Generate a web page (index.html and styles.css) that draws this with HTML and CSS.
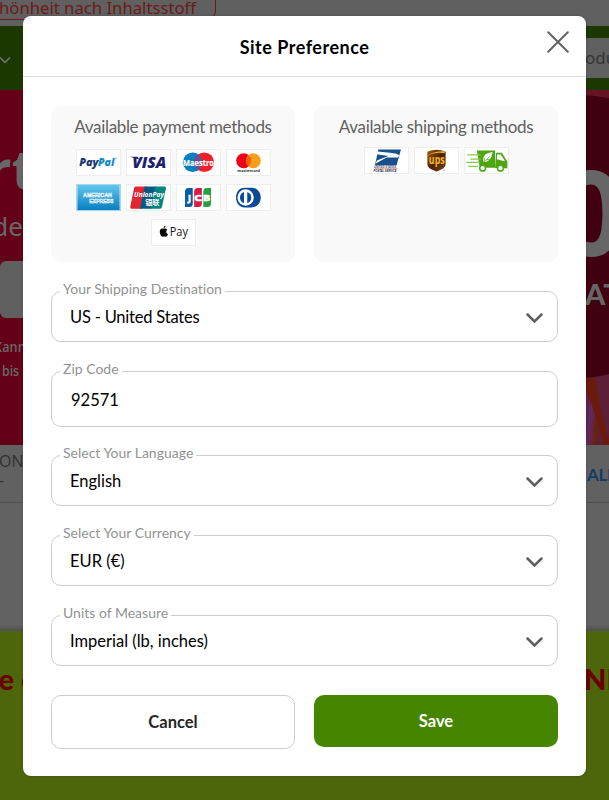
FILE: index.html
```html
<!DOCTYPE html>
<html lang="en">
<head>
<meta charset="utf-8">
<title>Site Preference</title>
<link rel="stylesheet" href="styles.css">
</head>
<body>
<div class="page">
  <div class="topbar"><span class="pill">Schönheit nach Inhaltsstoff</span></div>
  <div class="searchbar">
    <svg class="menu-arrow" viewBox="0 0 12 8"><path d="M1 1.5 6 6.5 11 1.5"/></svg>
    <div class="search">Produkte</div>
  </div>
  <div class="hero">
    <div class="hero-left">
      <div class="hero-title"><span>rt</span></div>
      <div class="hero-sub"><span>de</span></div>
      <div class="hero-button"></div>
      <div class="hero-note"><span class="note-one">Kann</span><span class="note-two">bis</span></div>
    </div>
    <div class="hero-right">
      <svg class="hero-art" viewBox="0 0 30 355">
        <defs><linearGradient id="petal" x1="0" x2="1" y1="0" y2=".4"><stop stop-color="#611c43"/><stop offset=".4" stop-color="#602963"/><stop offset=".75" stop-color="#68220f"/><stop offset="1" stop-color="#5b2037"/></linearGradient></defs>
        <path d="M0 0H30V355H0z" fill="#5c1f36"/>
        <path d="M0 0H30V8Q15 4 0 5z" fill="#651424"/>
        <path d="M7 285H16Q20 320 30 350V355H7z" fill="#6b1b0d"/>
        <path d="M7 302Q18 325 24 355H7z" fill="url(#petal)"/>
        <path d="M0 5Q15 5 30 8V284Q15 288 0 288z" fill="#41000f"/>
      </svg>
      <span class="hero-zero">0</span>
      <span class="hero-rate">AT</span>
    </div>
  </div>
  <div class="nav"><span class="nav-left">ON<br>-</span><span class="nav-right">ALL</span></div>
  <div class="blank"></div>
  <div class="promo"><span class="promo-left">re e</span><span class="promo-right">NE</span></div>
</div>

<main class="modal">
  <header class="modal-head">
    <h1>Site Preference</h1>
    <svg class="close" viewBox="0 0 22 22"><path d="M1.2 1.2 20.8 20.8M20.8 1.2 1.2 20.8"/></svg>
  </header>
  <div class="modal-body">
    <div class="cards">
      <section class="card">
        <h2 class="pay-title">Available payment methods</h2>
        <div class="logos">
          <svg class="logo" viewBox="0 0 44 26"><g font-family="Open Sans" font-weight="800" font-style="italic" font-size="11.500"><text x="2" y="16.500" fill="#173672" textLength="20" lengthAdjust="spacingAndGlyphs">Pay</text><text x="21.500" y="16.500" fill="#148bc5" textLength="17" lengthAdjust="spacingAndGlyphs">Pal</text></g><path d="M39 8.500h2.500" stroke="#83b9d5"/></svg>
          <svg class="logo" viewBox="0 0 44 26"><text x="5" y="18.800" fill="#20206e" font-family="Open Sans" font-weight="800" font-style="italic" font-size="16.500" textLength="35.500" lengthAdjust="spacingAndGlyphs">VISA</text><path d="M2.500 7h8l2 3z" fill="#20206e"/></svg>
          <svg class="logo" viewBox="0 0 44 26"><circle cx="16" cy="12.800" r="10.200" fill="#087fc1"/><circle cx="28" cy="12.800" r="10.200" fill="#ee202b"/><path d="M22 4.500a10.200 10.200 0 0 1 0 16.600 10.200 10.200 0 0 1 0-16.600" fill="#754c8b"/><text x="6" y="16.700" fill="#fff" stroke="#fff" stroke-width=".2" font-family="Open Sans" font-weight="700" font-size="10" textLength="32" lengthAdjust="spacingAndGlyphs">Maestro</text></svg>
          <svg class="logo" viewBox="0 0 44 26"><circle cx="17" cy="11.200" r="7.800" fill="#eb001b"/><circle cx="27" cy="11.200" r="7.800" fill="#f79e1b"/><path d="M22 5.200a7.800 7.800 0 0 1 0 12 7.800 7.800 0 0 1 0-12" fill="#ff5f00"/><text x="10.300" y="22.800" fill="#222" font-family="Lato" font-weight="700" font-size="4.400" textLength="23.500" lengthAdjust="spacingAndGlyphs">mastercard</text></svg>
          <svg class="logo amex" viewBox="0 0 44 26"><defs><linearGradient id="amex" x2="0" y2="1"><stop stop-color="#62c6eb"/><stop offset="1" stop-color="#087fc1"/></linearGradient></defs><path d="M0 0h44v26H0z" fill="url(#amex)"/><g fill="#4eaddb" stroke="#fff" stroke-width=".5" font-family="Liberation Sans" font-weight="700" font-size="6"><text x="6" y="12" textLength="30" lengthAdjust="spacingAndGlyphs">AMERICAN</text><text x="12.500" y="18.500" textLength="25" lengthAdjust="spacingAndGlyphs">EXPRESS</text></g></svg>
          <svg class="logo" viewBox="0 0 44 26"><path d="M8 1.500h12L15 24.700H4.500Q2.500 24.700 3 22.500L7 3q.4-1.500 2-1.500z" fill="#e52432"/><path d="M18 1.500h12l-5 23.200H13z" fill="#075985"/><path d="M29 1.500h9.500q2 0 1.600 2L36 23q-.4 1.700-2 1.700H24z" fill="#078482"/><g fill="#fff" font-weight="700"><text x="7" y="12.300" font-style="italic" font-family="Open Sans" font-size="7.300" textLength="31" lengthAdjust="spacingAndGlyphs">UnionPay</text><text x="18.500" y="21" font-family="Noto Sans CJK SC" font-size="7.200" textLength="15" lengthAdjust="spacingAndGlyphs">银联</text></g></svg>
          <svg class="logo" viewBox="0 0 44 26"><path d="M8 19V7q0-4 3.500-4H16v16q0 4-3.500 4H8z" fill="#095ba5"/><path d="M17.500 19V7q0-4 3.500-4h4.500v16q0 4-3.500 4h-4.500z" fill="#d81b47"/><path d="M27 19V7q0-4 3.500-4H35v16q0 4-3.500 4H27z" fill="#25a043"/><g fill="#fff" stroke="#fff" stroke-width=".6" font-family="Open Sans" font-weight="700" font-size="9.500"><text x="11" y="16.500">J</text><text x="17.500" y="16.500" textLength="8" lengthAdjust="spacingAndGlyphs">C</text><text x="26.800" y="16.500" textLength="7.500" lengthAdjust="spacingAndGlyphs">B</text></g></svg>
          <svg class="logo" viewBox="0 0 44 26"><path d="M18 2.800h7c13 0 13 20.500 0 20.500h-7c-12 0-12-20.500 0-20.500" fill="#084b96"/><circle cx="19" cy="13" r="8.500" fill="#fff"/><path d="M17.300 7.200a6.200 6.200 0 0 0 0 11.700zM20.700 7.200a6.200 6.200 0 0 1 0 11.700z" fill="#084b96"/></svg>
          <svg class="logo" viewBox="0 0 44 26"><path d="M11.600 8.600c.2-1.300 1-2.200 2.100-2.500.1 1.200-.8 2.400-2.100 2.500M15.600 10.100c-1.800 1-1.300 3.800.7 4.500-.8 2-1.800 3.200-2.900 2.800-1-.4-1.500-.4-2.400 0-2 .7-4.600-5.100-2.500-7.700 1.200-1.200 2.200-.8 3.200-.5 1-.4 2.700-.8 3.900.9" fill="#080808"/><text x="18" y="17" font-family="Open Sans" font-size="13" fill="#151515" textLength="19" lengthAdjust="spacingAndGlyphs">Pay</text></svg>
        </div>
      </section>
      <section class="card">
        <h2 class="ship-title">Available shipping methods</h2>
        <div class="logos ship">
          <svg class="logo" viewBox="0 0 44 26"><path d="M13.500 1.500H37L32.500 18H10z" fill="#17508d"/><path d="M12.800 3.600 28 5.200q5 .4 7.300 2.300L34 10H22L10.800 16.200l1.200-3.200 12-4.700-12.300-1.900zM29.500 8.500h4l-1 1.200h-4z" fill="#fff"/><path d="M10 21.300h23.500" stroke="#ce4552" stroke-width=".5"/><g font-family="Liberation Sans" font-weight="700" font-style="italic"><text x="9" y="20.700" fill="#444c63" font-size="2.800" textLength="23" lengthAdjust="spacingAndGlyphs">UNITED STATES</text><text x="8.500" y="24.700" fill="#171b39" font-size="3.600" textLength="24" lengthAdjust="spacingAndGlyphs">POSTAL SERVICE</text></g></svg>
          <svg class="logo" viewBox="0 0 44 26"><defs><linearGradient id="ups" y2="1"><stop stop-color="#a85c09"/><stop offset=".5" stop-color="#4b210b"/><stop offset="1" stop-color="#7a430a"/></linearGradient></defs><path d="M12.500 4Q22-.5 31.500 4v12c0 5-4 6-9.500 8.500-5.500-2.500-9.500-3.500-9.500-8.500z" fill="url(#ups)"/><path d="M13.500 7.600Q19 3 30.500 3.300v2.100Q20 4 13.500 8z" fill="#edac31"/><text x="14" y="17" fill="#f9b91f" font-family="Open Sans" font-weight="700" font-size="12" textLength="16.500" lengthAdjust="spacingAndGlyphs">ups</text><path d="M29 23h2" stroke="#777" stroke-width=".6"/></svg>
          <svg class="logo" viewBox="0 0 44 26"><path d="M12 2.500h19v18H15zM32 5h6l4.500 7.500 1.200 1V21H31z" fill="#4da514"/><path d="M33 6.800h3.800l4 6.200v.7l-8-2z" fill="#fff"/><path d="M2 7.200h14M5 11.500h11M1 15h14M3 19h10" stroke="#8cc84b" stroke-width="1.300"/><circle cx="18" cy="21" r="3" fill="#fff" stroke="#4da514" stroke-width="1.500"/><circle cx="36.500" cy="21" r="3" fill="#fff" stroke="#4da514" stroke-width="1.500"/><path d="M28.500 4.500c-8 .5-11 4-9.500 10 5 .5 8-3 9.500-10" fill="#fff"/><path d="m18 16.500 7.500-8M20 14v-4M22 12h4" fill="none" stroke="#4da514" stroke-width=".7"/></svg>
        </div>
      </section>
    </div>

    <form>
      <fieldset class="field"><legend><span>Your Shipping Destination</span></legend><div class="value"><span class="country">US - United States</span><svg class="chevron" viewBox="0 0 17 10"><path d="M1.500 1.500 8.500 8.500 15.500 1.500"/></svg></div></fieldset>
      <fieldset class="field zip"><legend><span>Zip Code</span></legend><div class="value"><span>92571</span></div></fieldset>
      <fieldset class="field"><legend><span>Select Your Language</span></legend><div class="value"><span>English</span><svg class="chevron" viewBox="0 0 17 10"><path d="M1.500 1.500 8.500 8.500 15.500 1.500"/></svg></div></fieldset>
      <fieldset class="field"><legend><span>Select Your Currency</span></legend><div class="value"><span>EUR (€)</span><svg class="chevron" viewBox="0 0 17 10"><path d="M1.500 1.500 8.500 8.500 15.500 1.500"/></svg></div></fieldset>
      <fieldset class="field"><legend><span>Units of Measure</span></legend><div class="value"><span>Imperial (lb, inches)</span><svg class="chevron" viewBox="0 0 17 10"><path d="M1.500 1.500 8.500 8.500 15.500 1.500"/></svg></div></fieldset>
      <div class="actions"><button type="button" class="cancel">Cancel</button><button type="button" class="save">Save</button></div>
    </form>
  </div>
</main>
</body>
</html>
```
FILE: styles.css
```css
* { box-sizing: border-box; }
body { margin: 0; width: 609px; height: 800px; overflow: hidden; position: relative; font-family: Lato, "Liberation Sans", sans-serif; font-variant-ligatures: none; }
svg { display: block; flex: none; }

.page { height: 800px; overflow: hidden; background: #626262; }
.page span { white-space: nowrap; }
.topbar { height: 26px; background: #606060; display: flex; align-items: flex-start; }
.pill { flex: none; height: 20px; width: 236px; margin-left: -20px; padding-right: 19px; border: 1px solid #6b1b18; border-top: 0; border-radius: 0 0 9px 9px; color: #6b1b18; font: 16.700px/15px "Noto Sans", sans-serif; text-align: right; display: flex; justify-content: flex-end; }
.searchbar { height: 64px; background: #1c3800; display: flex; justify-content: space-between; align-items: center; }
.menu-arrow { width: 12px; height: 8px; margin-left: -1px; margin-top: 4px; fill: none; stroke: #777; stroke-width: 1.5; }
.search { width: 54px; height: 40px; background: #606060; color: #353535; font: 17px/40px "Noto Sans", sans-serif; padding-left: 13px; overflow: hidden; }
.hero { height: 355px; background: #650019; display: flex; justify-content: space-between; overflow: hidden; }
.hero-left { width: 23px; overflow: hidden; color: #686868; }
.hero-title, .hero-sub { display: flex; justify-content: flex-end; }
.hero-title { height: 114px; padding-top: 43px; margin-right: -12px; font: 700 54px/70px "Open Sans", sans-serif; }
.hero-sub { font: 26px/44px "Noto Sans", sans-serif; }
.hero-button { margin-top: 13px; height: 57px; width: 40px; border-radius: 6px; background: #606060; }
.hero-note { margin-top: 17px; display: flex; flex-direction: column; font: 600 15px/23px "Open Sans", sans-serif; }
.note-one { margin-left: -6px; transform-origin: left; transform: scaleX(.85); }
.note-two { margin-left: 2px; margin-top: 1px; transform-origin: left; transform: scaleX(.82); }
.hero-right { width: 30px; display: grid; overflow: hidden; color: #666; }
.hero-art { width: 30px; height: 355px; }
.hero-right > * { grid-area: 1 / 1; }
.hero-zero { height: 180px; margin-left: -22px; padding-top: 66px; font: 700 118px/110px "Open Sans", sans-serif; }
.hero-rate { margin-left: 6px; padding-top: 188px; font: 900 29px/32px Lato, sans-serif; }
.nav { height: 58px; display: flex; justify-content: space-between; border-bottom: 1px solid #505050; background: #616161; }
.nav-left { font: 16px/19px "Open Sans", sans-serif; color: #303030; padding-top: 7px; margin-left: -1px; }
.nav-right { width: 22px; overflow: hidden; color: #133c67; font: 700 17px/60px Lato, sans-serif; letter-spacing: -.3px; }
.blank { height: 128px; background: linear-gradient(#626262 95%, #4e4e4e); }
.promo { height: 169px; background: #4d650b; color: #6b0000; display: flex; justify-content: space-between; font: 900 29px/95px Lato, sans-serif; overflow: hidden; }
.promo-left { margin-left: -12px; }
.promo-right { width: 25px; overflow: hidden; }

.modal { position: absolute; left: 23px; top: 16px; width: 563px; height: 760.400px; background: #fff; border-radius: 8px; box-shadow: 0 0 3px rgba(0,0,0,.2); }
.modal-head { height: 61px; border-bottom: 1px solid #dedede; display: grid; grid-template-columns: 46px 1fr 46px; align-items: center; }
.modal-head h1 { grid-column: 2; margin: 1px 0 0; text-align: center; color: #000; font-size: 18px; letter-spacing: .5px; line-height: 24px; font-weight: 700; }
.close { width: 22px; height: 22px; margin: -9px 0 0 7px; fill: none; stroke: #626262; stroke-width: 2; stroke-linecap: round; }
.modal-body { padding: 29px 28px 0; }
.cards { display: grid; grid-template-columns: 244px 244px; gap: 19px; }
.card { height: 156px; padding-top: 10px; background: #f9f9f9; border-radius: 10px; }
.card h2 { margin: 0 0 11px; text-align: center; color: #606060; font-size: 17px; letter-spacing: -.33px; line-height: 22px; font-weight: 400; white-space: nowrap; }
.logos { display: flex; flex-wrap: wrap; justify-content: center; gap: 8px 5px; padding: 0 20px; }
.card .ship-title { margin-bottom: 9px; }
.logo { width: 45px; height: 27px; background: #fff; border: 1px solid #eee; }
.amex { border-color: #a8d5eb; }
form { margin-top: 18px; }
.field { margin: 0 0 18px; padding: 0; width: 507px; height: 62px; border: 1px solid #ccc; border-radius: 10px; min-width: 0; }
.field legend { height: 22px; margin-left: 8px; padding: 0 3px; color: #929292; font-size: 14px; line-height: 18px; white-space: nowrap; }
.value { height: 39px; padding: 0 14px 10px 18px; display: flex; align-items: center; justify-content: space-between; color: #000; font-size: 16.500px; line-height: 22px; }
.country { letter-spacing: -.2px; }
.chevron { width: 17px; height: 10px; margin-top: 2px; fill: none; stroke: #606060; stroke-width: 2.500; stroke-linecap: round; }
.zip { height: 67px; margin-bottom: 17px; }
.zip .value { height: 44px; padding: 0 0 8px 19px; }
.actions { display: grid; grid-template-columns: 244px 244px; gap: 19px; align-items: start; margin-top: 28.500px; }
button { border-radius: 10px; padding: 0; font: 700 16.500px/24px Lato, sans-serif; }
.cancel { height: 54px; border: 1px solid #ccc; background: #fff; color: #252525; }
.save { height: 52px; border: 0; background: #458500; color: #fff; }
```
